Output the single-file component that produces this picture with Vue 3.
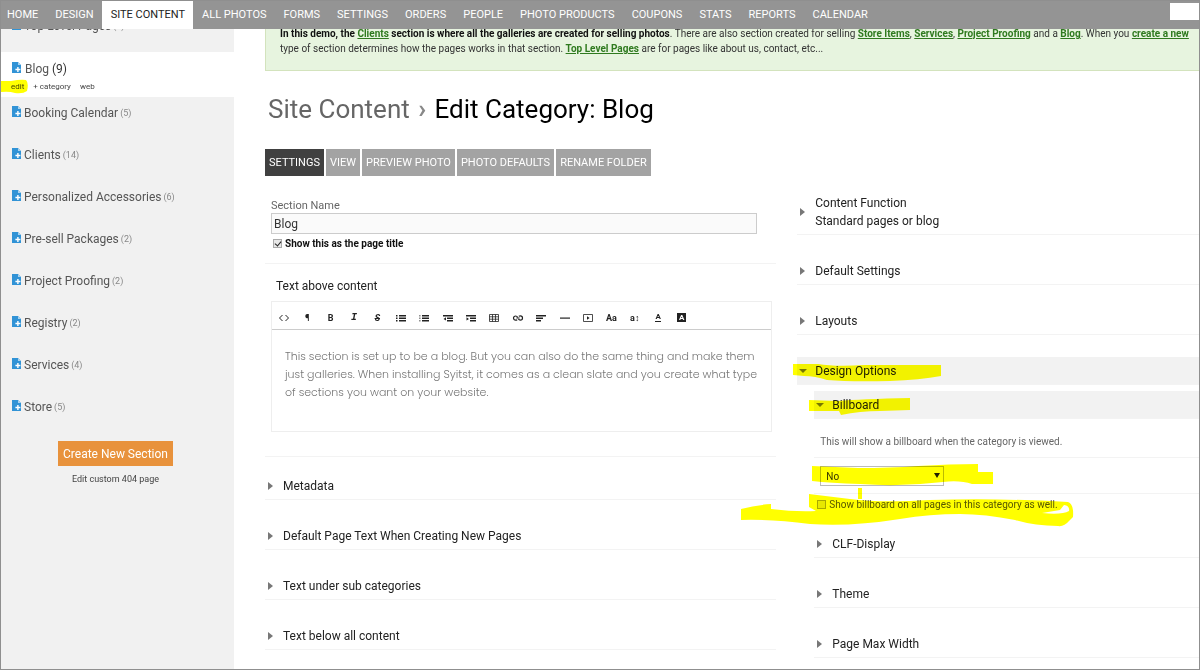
<template>
  <div class="screen">
    <nav class="topbar">
      <a
        v-for="item in navItems"
        :key="item"
        href="#"
        class="nav-link"
        :class="{ active: item === 'SITE CONTENT' }"
      >{{ item }}</a>
      <input class="nav-search" type="text" aria-label="Search">
    </nav>

    <aside class="sidebar">
      <ul class="sections">
        <li v-for="s in sections" :key="s.name" class="section" :class="{ current: s.current }">
          <a href="#" class="section-link">
            <svg class="file-icon" viewBox="0 0 9 11" aria-hidden="true">
              <path d="M0 0h6l3 3v8H0z" fill="#3193d6" />
              <path d="M6 0l3 3H6z" fill="#a9d2ef" />
              <path d="M5.9 5v5M3.4 7.5h5" stroke="#fff" stroke-width="1.4" />
            </svg>
            <span class="section-name">{{ s.name }}</span>
            <span class="section-count">({{ s.count }})</span>
          </a>
          <div v-if="s.current" class="section-actions">
            <a href="#">edit</a>
            <a href="#">+ category</a>
            <a href="#">web</a>
            <svg class="marker marker-edit" viewBox="0 0 27 16" aria-hidden="true">
              <path d="M0 2H10Q20 0 25 1Q28 4 26 12Q22 15 14 14Q8 12 0 13Z" />
            </svg>
          </div>
        </li>
      </ul>
      <div class="sidebar-foot">
        <button class="create-btn">Create New Section</button>
        <a href="#" class="edit-404">Edit custom 404 page</a>
      </div>
    </aside>

    <main class="main">
      <p class="notice">
        <strong>In this demo, the <a href="#">Clients</a> section is where all the galleries are created for selling photos</strong>. There are also section created for selling <a href="#">Store Items</a>, <a href="#">Services</a>, <a href="#">Project Proofing</a> and a <a href="#">Blog</a>. When you <a href="#">create a new</a><br>
        type of section determines how the pages works in that section. <a href="#">Top Level Pages</a> are for pages like about us, contact, etc...
      </p>

      <h1 class="title"><a href="#">Site Content</a> <span class="sep">›</span> Edit Category: Blog</h1>

      <div class="tabs">
        <button v-for="(tab, i) in tabs" :key="tab" class="tab" :class="{ active: i === 0 }">{{ tab }}</button>
      </div>

      <div class="columns">
        <section class="col-left">
          <div class="name-block">
            <label class="field-label" for="section-name">Section Name</label>
            <input id="section-name" v-model="sectionName" class="text-input" type="text">
            <label class="check check-bold"><input v-model="showTitle" type="checkbox"> Show this as the page title</label>
          </div>

          <div class="editor-block">
            <h2 class="editor-title">Text above content</h2>
            <div class="editor">
              <div class="toolbar">
                <button v-for="tool in tools" :key="tool.name" class="tool" :aria-label="tool.name">
                  <span v-if="tool.text" :class="'glyph glyph-' + tool.name">{{ tool.text }}</span>
                  <svg v-else viewBox="0 0 12 10" class="tool-icon" aria-hidden="true">
                    <path v-if="tool.fill" :d="tool.fill" fill="#222" />
                    <path v-if="tool.line" :d="tool.line" fill="none" stroke="#222" :stroke-width="tool.w || 1" />
                  </svg>
                </button>
              </div>
              <div class="editor-body">
                This section is set up to be a blog. But you can also do the same thing and make them<br>
                just galleries. When installing Syitst, it comes as a clean slate and you create what type<br>
                of sections you want on your website.
              </div>
            </div>
          </div>

          <div class="panels">
            <button v-for="p in leftPanels" :key="p" class="panel-head">{{ p }}</button>
          </div>
        </section>

        <section class="col-right">
          <div class="panels">
            <button class="panel-head">Content Function<br>Standard pages or blog</button>
            <button class="panel-head">Default Settings</button>
            <button class="panel-head">Layouts</button>
            <div class="open-panel">
              <button class="panel-head open">Design Options</button>
              <div class="nested">
                <button class="panel-head open">Billboard</button>
                <p class="option-row">This will show a billboard when the category is viewed.</p>
                <div class="option-row select-row">
                  <select v-model="billboard" class="select" aria-label="Billboard">
                    <option>No</option>
                    <option>Yes</option>
                  </select>
                </div>
                <div class="check-row">
                  <label class="check"><input v-model="allPages" type="checkbox"> Show billboard on all pages in this category as well.</label>
                </div>
                <div class="panels">
                  <button v-for="p in designPanels" :key="p" class="panel-head">{{ p }}</button>
                </div>
              </div>
              <svg class="marker marker-design" viewBox="737 357 400 180" aria-hidden="true">
                <path d="M793 364H818Q835 367 865 365L941 365V376Q920 380 890 381Q850 382 827 380Q815 376 804 376L793 375Z" />
                <path d="M809 400L838 401Q860 399 910 398V410L880 411Q860 411 841 415L839 411H809Z" />
                <path d="M812 466L858 468Q890 468 918 466Q950 464 978 464V472H993V484H972Q960 480 943 482Q900 487 860 484Q830 483 812 481Z" />
                <path d="M858 488H862V499H858Z" />
                <path fill-rule="evenodd" d="M741 509Q756 505 771 504V509Q795 512 816 511L809 507V494L850 499Q880 503 930 500Q1000 498 1068 502Q1074 504 1073 517L1069 521Q1064 527 1058 526Q1035 526 1015 520Q985 514 960 514Q930 514 900 519Q850 527 810 524Q770 519 741 520ZM1042 513Q1062 515 1069 511Q1070 506 1064 505L1060 510Z" />
              </svg>
            </div>
          </div>
        </section>
      </div>
    </main>
  </div>
</template>

<script setup>
import { ref } from 'vue'

const navItems = [
  'HOME', 'DESIGN', 'SITE CONTENT', 'ALL PHOTOS', 'FORMS', 'SETTINGS', 'ORDERS',
  'PEOPLE', 'PHOTO PRODUCTS', 'COUPONS', 'STATS', 'REPORTS', 'CALENDAR'
]

const sections = [
  { name: 'Top Level Pages', count: 7 },
  { name: 'Blog', count: 9, current: true },
  { name: 'Booking Calendar', count: 5 },
  { name: 'Clients', count: 14 },
  { name: 'Personalized Accessories', count: 6 },
  { name: 'Pre-sell Packages', count: 2 },
  { name: 'Project Proofing', count: 2 },
  { name: 'Registry', count: 2 },
  { name: 'Services', count: 4 },
  { name: 'Store', count: 5 }
]

const tabs = ['SETTINGS', 'VIEW', 'PREVIEW PHOTO', 'PHOTO DEFAULTS', 'RENAME FOLDER']

const leftPanels = [
  'Metadata',
  'Default Page Text When Creating New Pages',
  'Text under sub categories',
  'Text below all content'
]
const designPanels = ['CLF-Display', 'Theme', 'Page Max Width']

const tools = [
  { name: 'html', line: 'M4.5 2L1.5 5l3 3M7.5 2l3 3-3 3' },
  { name: 'format', text: '¶' },
  { name: 'bold', text: 'B' },
  { name: 'italic', text: 'I' },
  { name: 'deleted', text: 'S' },
  { name: 'bullets', fill: 'M1 2h1.5v1.5H1zM1 4.5h1.5V6H1zM1 7h1.5v1.5H1zM4 2h7v1.5H4zM4 4.5h7V6H4zM4 7h7v1.5H4z' },
  { name: 'numbers', fill: 'M1.5 2h.8v1.5h-.8zM1.5 4.5h.8V6h-.8zM1.5 7h.8v1.5h-.8zM4 2h7v1.5H4zM4 4.5h7V6H4zM4 7h7v1.5H4z' },
  { name: 'outdent', fill: 'M1 2h10v1.5H1zM5 4.5h6V6H5zM5 7h6v1.5H5zM4 4.2v3.4L1.5 5.9z' },
  { name: 'indent', fill: 'M1 2h10v1.5H1zM5 4.5h6V6H5zM5 7h6v1.5H5zM1.5 4.2v3.4L4 5.9z' },
  { name: 'table', line: 'M1.5 1.5h9v7h-9zM1.5 3.8h9M1.5 6.2h9M4.5 1.5v7M7.5 1.5v7', w: 0.8 },
  { name: 'link', line: 'M5.2 6.8Q4.6 7.2 3.6 7.2A2.1 2.1 0 0 1 3.6 3Q5 3 5.6 4.2M6.8 3.2Q7.4 2.9 8.4 2.9A2.1 2.1 0 0 1 8.4 7.1Q7 7.1 6.4 6M4.4 5h3.2', w: 1.2 },
  { name: 'align', fill: 'M1 2h10v1.5H1zM1 4.5h7V6H1zM1 7h5v1.5H1z' },
  { name: 'rule', fill: 'M1 4.5h10v1.2H1z' },
  { name: 'video', fill: 'M5 3.2v3.6L7.6 5z', line: 'M1.5 1.5h9v7h-9z', w: 0.8 },
  { name: 'font', text: 'Aa' },
  { name: 'size', text: 'a↕' },
  { name: 'color', text: 'A' },
  { name: 'backcolor', text: 'A' }
]

const sectionName = ref('Blog')
const showTitle = ref(true)
const allPages = ref(false)
const billboard = ref('No')
</script>

<style>
body {
  margin: 0;
}
</style>

<style scoped>
* {
  box-sizing: border-box;
}

.screen {
  position: relative;
  display: grid;
  grid-template-columns: 233px minmax(0, 1fr);
  height: 100vh;
  overflow: hidden;
  border: 1px solid #8f8f8f;
  background: #fff;
  color: #222;
  font-family: Roboto, "Liberation Sans", sans-serif;
  font-size: 12px;
}

a {
  color: inherit;
  text-decoration: none;
}

button {
  font-family: inherit;
  border: 0;
  cursor: pointer;
}

.topbar {
  position: absolute;
  top: 0;
  left: 0;
  right: 0;
  z-index: 5;
  display: flex;
  height: 28px;
  background: #949494;
}

.nav-link {
  padding: 0 8px 0 9px;
  color: #fff;
  font-size: 11px;
  line-height: 28px;
  white-space: nowrap;
}

.nav-link:first-child {
  padding-left: 6px;
}

.nav-link.active {
  background: #fff;
  color: #222;
}

.nav-search {
  width: 29px;
  height: 17px;
  margin: 2px 0 0 auto;
  border: 0;
  background: #fff;
}

.sidebar {
  padding-top: 9px;
  background: #f1f1f1;
}

.sections {
  margin: 0;
  padding: 0;
  list-style: none;
}

.section {
  padding: 8px 10px 18px;
  line-height: 16px;
}

.section-link {
  display: flex;
  align-items: center;
  gap: 2px;
  color: #555;
}

.file-icon {
  width: 9px;
  height: 11px;
  margin: 0 1px 4px;
}

.section-count {
  color: #888;
  font-size: 9px;
}

.section.current {
  padding: 9px 10px 2px;
  background: #fff;
}

.current .section-link {
  gap: 3px;
}

.current .section-count {
  color: #333;
  font-size: 12px;
}

.section-actions {
  position: relative;
  display: flex;
  gap: 9px;
  padding-top: 2px;
  color: #444;
  font-size: 8px;
}

.marker {
  position: absolute;
  fill: #ffff00;
  mix-blend-mode: multiply;
  pointer-events: none;
}

.marker-edit {
  top: 2px;
  left: -10px;
  width: 27px;
  height: 16px;
}

.sidebar-foot {
  display: flex;
  flex-direction: column;
  align-items: center;
  gap: 6px;
  padding: 8px 4px 0 0;
}

.create-btn {
  height: 25px;
  padding: 0 5px;
  background: #e8923c;
  color: #fff;
  font-size: 12px;
}

.edit-404 {
  color: #444;
  font-size: 9px;
  line-height: 14px;
}

.main {
  padding-left: 31px;
}

.notice {
  margin: 0;
  padding: 25px 14px 14px;
  overflow: hidden;
  border: 1px solid #d3e3bd;
  border-width: 0 0 1px 1px;
  background: #e7f4df;
  color: #333;
  font-size: 10px;
  line-height: 15px;
  white-space: nowrap;
}

.notice strong {
  color: #111;
}

.notice a {
  color: #2f7a1f;
  font-weight: bold;
  text-decoration: underline;
}

.title {
  margin: 22px 0 0 3px;
  color: #000;
  font-size: 26px;
  font-weight: 400;
  line-height: 32px;
}

.title a {
  color: #666;
}

.sep {
  margin: 0 2px;
  color: #888;
  font-weight: bold;
}

.tabs {
  display: flex;
  gap: 2px;
  margin-top: 24px;
}

.tab {
  height: 27px;
  padding: 0 4px;
  background: #a3a3a3;
  color: #fff;
  font-size: 11px;
}

.tab.active {
  background: #404040;
}

.columns {
  display: grid;
  grid-template-columns: 56fr 44fr;
  gap: 21px;
  margin-top: 13px;
}

.name-block {
  padding: 9px 19px 12px 6px;
  border-bottom: 1px solid #f3f3f3;
}

.field-label {
  display: block;
  color: #666;
  font-size: 11px;
  line-height: 15px;
}

.text-input {
  display: block;
  width: 100%;
  height: 21px;
  padding: 0 2px;
  border: 1px solid #ccc;
  background: #fafafa;
  color: #333;
  font-family: inherit;
  font-size: 12px;
}

.check {
  display: flex;
  align-items: center;
  gap: 3px;
  color: #555;
  font-size: 11px;
  line-height: 14px;
}

.check input {
  appearance: none;
  position: relative;
  width: 9px;
  height: 9px;
  margin: 0 0 2px;
  border: 1px solid #aaa;
  background: #e8e8e8;
}

.check input:checked::after {
  content: "";
  position: absolute;
  top: 0;
  left: 2px;
  width: 3px;
  height: 5px;
  border: solid #222;
  border-width: 0 1px 1px 0;
  transform: rotate(40deg);
}

.check-bold {
  margin: 3px 0 0 2px;
  color: #111;
  font-size: 10px;
  font-weight: bold;
}

.editor-block {
  padding: 13px 4px 24px 6px;
  border-bottom: 1px solid #f3f3f3;
}

.editor-title {
  margin: 0 0 6px 5px;
  font-size: 12px;
  font-weight: 400;
  line-height: 18px;
}

.editor {
  border: 1px solid #eee;
}

.toolbar {
  display: grid;
  grid-template-columns: repeat(18, minmax(0, 1fr));
  height: 28px;
  padding: 4px 78px 0 0;
  border-bottom: 1px solid #ccc;
}

.tool {
  display: flex;
  align-items: center;
  justify-content: center;
  padding: 0;
  background: none;
  color: #222;
  font-size: 9px;
  font-weight: bold;
}

.tool-icon {
  width: 12px;
  height: 10px;
}

.glyph {
  line-height: 10px;
}

.glyph-italic {
  font-family: "Liberation Mono", monospace;
  font-size: 10px;
  font-style: italic;
}

.glyph-deleted {
  font-style: italic;
  text-decoration: line-through;
}

.glyph-color {
  border-bottom: 1px solid #222;
  font-size: 8px;
  line-height: 8px;
}

.glyph-backcolor {
  padding: 0 2px;
  background: #222;
  color: #fff;
  font-size: 8px;
  line-height: 9px;
}

.editor-body {
  min-height: 101px;
  padding: 17px 13px;
  color: #777;
  font-family: Poppins, Inter, "Liberation Sans", sans-serif;
  font-size: 11px;
  font-weight: 300;
  line-height: 18px;
  white-space: nowrap;
}

.panels {
  display: flex;
  flex-direction: column;
  gap: 22px;
}

.col-left .panels {
  padding-top: 15px;
}

.panel-head {
  position: relative;
  display: block;
  width: 100%;
  padding: 5px 0 4px 18px;
  border-bottom: 1px solid #f3f3f3;
  background: none;
  color: #222;
  font-size: 12px;
  line-height: 18px;
  text-align: left;
}

.panel-head::before {
  content: "";
  position: absolute;
  top: calc(50% - 4px);
  left: 3px;
  border: 4px solid transparent;
  border-left: 5px solid #777;
  border-right: 0;
}

.panel-head.open {
  background: #f2f2f2;
}

.panel-head.open::before {
  top: calc(50% - 2px);
  left: 2px;
  border: 4px solid transparent;
  border-top: 4px solid #777;
  border-bottom: 0;
}

.open-panel {
  position: relative;
}

.nested {
  padding: 6px 0 0 17px;
}

.option-row {
  margin: 0;
  padding: 14px 0 6px 6px;
  border-bottom: 1px solid #f3f3f3;
  color: #666;
  font-size: 10px;
  line-height: 18px;
}

.select-row {
  position: relative;
  padding: 8px 0 7px 6px;
}

.select-row::after {
  content: "";
  position: absolute;
  top: 15px;
  left: 120px;
  border: 3px solid transparent;
  border-top: 5px solid #222;
  border-bottom: 0;
  pointer-events: none;
}

.select {
  appearance: none;
  display: block;
  width: 124px;
  height: 20px;
  padding: 0 5px;
  border: 1px solid #bbb;
  border-radius: 0;
  background: #fff;
  color: #333;
  font-family: inherit;
  font-size: 10px;
}

.check-row {
  padding: 4px 0 18px 3px;
}

.check-row .check {
  font-size: 10px;
}

.marker-design {
  top: 0;
  left: -60px;
  width: 400px;
  height: 180px;
}
</style>
